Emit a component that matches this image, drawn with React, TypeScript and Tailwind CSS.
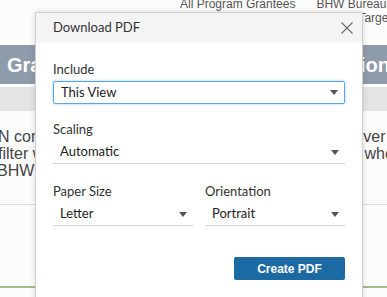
function Caret() {
  return (
    <svg width="8" height="5" viewBox="0 0 8 5" className="shrink-0">
      <path d="M0 0h8L4 5z" fill="#555" />
    </svg>
  );
}

function Field({ label, value, outlined }: { label: string; value: string; outlined?: boolean }) {
  return (
    <div>
      <div className="text-[13px] leading-4 text-[#333]">{label}</div>
      {outlined ? (
        <div className="mt-1 flex h-[23px] items-center justify-between rounded-[2px] border border-[#5aa6e8] pl-[7px] pr-[6px] text-[13px] text-[#222] shadow-[0_0_3px_#9fcdf3]">
          <span>{value}</span>
          <Caret />
        </div>
      ) : (
        <div className="mt-1 flex h-[23px] items-center justify-between border-b border-[#d4d4d4] pl-[7px] pr-[6px] text-[13px] text-[#222]">
          <span>{value}</span>
          <Caret />
        </div>
      )}
    </div>
  );
}

export default function App() {
  return (
    <div className="relative h-[297px] w-[387px] overflow-hidden bg-[#fcfcfc] font-['Liberation_Sans',Arial,sans-serif]">
      {/* page behind the dialog */}
      <div className="flex h-[45px] gap-[22px] overflow-hidden whitespace-nowrap pl-[180px] text-[12px] leading-[14px] text-[#555]">
        <div className="-mt-[3px]">All Program Grantees</div>
        <div className="-mt-[3px] -ml-px">
          BHW Bureau-
          <br />
          <span className="pl-[42px]">Target</span>
        </div>
      </div>
      <div className="flex h-[39px] items-center justify-between overflow-hidden whitespace-nowrap bg-[#8e9bab] pl-[7px] text-[20px] font-bold text-white">
        <span>Grantee Summary</span>
        <span className="-mr-[3px]">Information</span>
      </div>
      <div className="mt-[3px] h-[24px] bg-[#e4e4e4]" />
      <div className="mt-[17px] overflow-hidden whitespace-nowrap text-[16px] leading-[17px] text-[#444]">
        <div className="flex justify-between">
          <span className="-ml-[2px]">N comments</span>
          <span className="-mr-[6px]">ver '</span>
        </div>
        <div className="flex justify-between">
          <span className="-ml-[2px]">filter with</span>
          <span className="-mr-[21px]">where</span>
        </div>
        <div className="flex justify-between">
          <span className="-ml-[3px]">BHW Bureau</span>
          <span />
        </div>
      </div>
      <div className="mt-[25px] h-px bg-[#dcdcdc]" />
      <div className="mt-[81px] h-[2px] bg-[#a3bd84]" />

      {/* dialog */}
      <div className="absolute left-[35px] top-[12px] h-[300px] w-[328px] border border-[#cfcfcf] bg-white font-['Lato',sans-serif] shadow-[0_0_6px_rgba(0,0,0,0.15)]">
        <div className="flex h-[30px] items-center justify-between bg-[#f4f4f4] pl-[17px] pr-[8px]">
          <span className="text-[13px] text-[#333]">Download PDF</span>
          <svg width="12" height="12" viewBox="0 0 12 12" className="mr-[1px]">
            <path d="M0.5 0.5l11 11M11.5 0.5l-11 11" stroke="#6b6b6b" strokeWidth="1.1" fill="none" />
          </svg>
        </div>
        <div className="px-[17px] pt-[18px]">
          <Field label="Include" value="This View" outlined />
          <div className="mt-[17px]">
            <Field label="Scaling" value="Automatic" />
          </div>
          <div className="mt-[19px] grid grid-cols-2 gap-3">
            <Field label="Paper Size" value="Letter" />
            <Field label="Orientation" value="Portrait" />
          </div>
          <div className="mt-[31px] flex justify-end">
            <button className="h-[23px] w-[111px] rounded-[2px] bg-[#1c6aa3] font-['Liberation_Sans',Arial,sans-serif] text-[12px] font-bold text-white">
              Create PDF
            </button>
          </div>
        </div>
      </div>
    </div>
  );
}
